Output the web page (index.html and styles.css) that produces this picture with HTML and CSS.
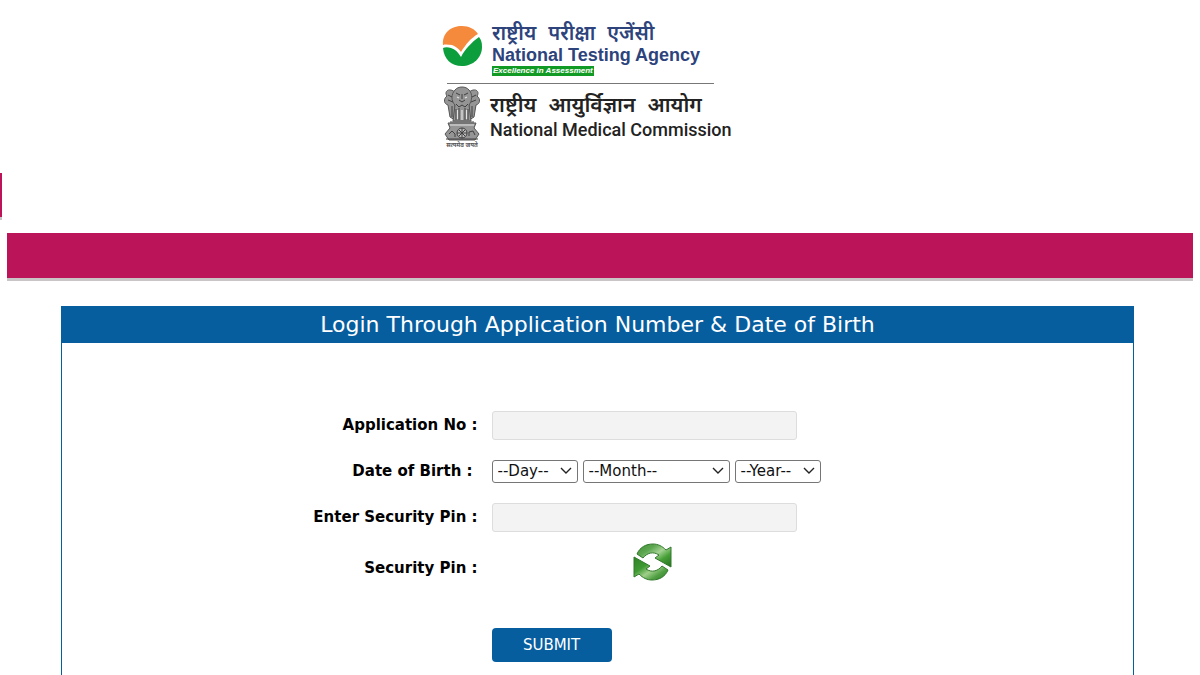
FILE: index.html
```html
<!DOCTYPE html>
<html lang="en">
<head>
<meta charset="utf-8">
<meta name="viewport" content="width=device-width, initial-scale=1">
<title>National Testing Agency</title>
<link rel="stylesheet" href="styles.css">
</head>
<body>
<header class="masthead">
  <div class="brand">
    <div class="agency">
      <svg class="agency-logo" viewBox="0 0 40 42" aria-hidden="true">
        <path fill="#f58a3c" d="M1 20C0 8 9 1 20 1c7 0 13 3 16 8-7 4-12 10-17 18-3-4-6-6-9-7-3 0-6-1-9 0z"/>
        <path fill="#0c9d3c" d="M1 23c2-1 5-1 8 0 4 1 7 4 10 9 4-8 11-15 18-20 3 4 3 7 3 10 0 11-9 19-20 19S2 34 1 23z"/>
      </svg>
      <div class="agency-text">
        <span class="hindi agency-hindi" lang="hi"><span>राष्ट्रीय</span> <span>परीक्षा</span> <span>एजेंसी</span></span>
        <span class="agency-name">National Testing Agency</span>
        <span class="agency-tag">Excellence in Assessment</span>
      </div>
    </div>
    <div class="commission">
      <div class="emblem">
        <svg class="emblem-art" viewBox="0 0 38 56" aria-hidden="true">
          <g fill="#959595" stroke="#555" stroke-width="1">
            <path d="M12 6C5 1 1 6 4 10c-4 3-3 8 1 9l2 12 5 3V15z"/>
            <path d="M26 6c7-5 11 0 8 4 4 3 3 8-1 9l-2 12-5 3V15z"/>
            <path d="M12 4c3-4 11-4 14 0 4 4 3 11 0 15l2 16H10l2-16c-4-4-4-11 0-15z"/>
            <path d="M5 37h28l-2 5 5 6-4 6H6l-4-6 5-6z"/>
          </g>
          <g fill="none" stroke="#404040" stroke-width="1">
            <path d="M13 7l4 2M25 7l-4 2M19 8v5M16 14l3 2 3-2M13 18l3 3 3-2 3 2 3-3M5 9l4 2M33 9l-4 2M5 14l5 2M33 14l-5 2M9 20v11M29 20v11M13 23v11M16 22v12M22 22v12M25 23v11M7 36h24M3 53h32"/>
            <circle cx="19" cy="47" r="5" fill="#bbb"/><path d="M19 42v10M14 47h10M16 44l6 6M22 44l-6 6M6 48l3-3 3 3v3M26 50v-4l4-1 2 4"/>
          </g>
          <g stroke="#e4e4e4" stroke-width="1.2"><path d="M14.500 24v9M19 24v10M23.500 24v9M14 11l2 1M24 11l-2 1M7 39h24"/></g>
        </svg>
        <span class="motto" lang="hi">सत्यमेव जयते</span>
      </div>
      <div class="commission-text">
        <span class="hindi commission-hindi" lang="hi"><span>राष्ट्रीय</span> <span>आयुर्विज्ञान</span> <span>आयोग</span></span>
        <span class="commission-name">National Medical Commission</span>
      </div>
    </div>
  </div>
</header>
<div class="ticker"></div>
<div class="banner"></div>
<main class="panel">
  <h1 class="panel-title">Login Through Application Number &amp; Date of Birth</h1>
  <form class="login">
    <label class="caption" for="appno">Application No :</label>
    <input class="field" id="appno" type="text">
    <label class="caption caption-date" for="day">Date of Birth :</label>
    <div class="dates">
      <select class="pick" id="day"><option>--Day--</option></select>
      <select class="pick pick-month" aria-label="Month"><option>--Month--</option></select>
      <select class="pick" aria-label="Year"><option>--Year--</option></select>
    </div>
    <label class="caption" for="pin">Enter Security Pin :</label>
    <input class="field" id="pin" type="text">
    <span class="caption">Security Pin :</span>
    <button class="refresh" type="button" aria-label="Refresh security pin">
      <svg class="refresh-icon" viewBox="0 0 39 38" aria-hidden="true">
        <defs>
          <linearGradient id="leaf" x1="0" y1="0" x2="1" y2="1"><stop offset="0" stop-color="#3d8c35"/><stop offset=".3" stop-color="#5fa852"/><stop offset=".5" stop-color="#a5d394"/><stop offset=".7" stop-color="#48a038"/><stop offset="1" stop-color="#23711e"/></linearGradient>
          <linearGradient id="moss" x1="0" y1="0" x2="1" y2="1"><stop offset="0" stop-color="#2c8124"/><stop offset=".35" stop-color="#3f9a33"/><stop offset=".55" stop-color="#a0cf8a"/><stop offset=".75" stop-color="#4f9f42"/><stop offset="1" stop-color="#2f7c28"/></linearGradient>
        </defs>
        <path fill="url(#leaf)" stroke="#31782b" d="M4 11C7 4 13 1 20 1c5 0 9 2 13 6l5-3v20L22 15l4-3c-6-4-12-2-16 3z"/>
        <path fill="url(#moss)" stroke="#31782b" d="M35 27c-3 7-9 10-16 10-5 0-9-2-13-6l-5 3V14l16 9-4 3c6 4 12 2 16-3z"/>
      </svg>
    </button>
    <button class="submit" type="submit">SUBMIT</button>
  </form>
</main>
</body>
</html>
```
FILE: styles.css
```css
* { box-sizing: border-box; }
body {
  margin: 0;
  background: #fff;
  color: #111;
  font-family: "DejaVu Sans", Verdana, sans-serif;
}
.masthead {
  display: flex;
  justify-content: center;
  min-height: 173px;
  padding: 20px 28px 0 0;
}
.brand { display: flex; flex-direction: column; width: 288px; }
.agency {
  display: flex;
  gap: 10px;
  width: 272px;
  padding-bottom: 7px;
}
.agency-logo { flex: none; width: 40px; height: 42px; margin-top: 5px; }
.agency-text { display: flex; flex-direction: column; align-items: flex-start; white-space: nowrap; }
.hindi { display: flex; gap: 12px; }
.agency-hindi { font: 600 20px/25px "Noto Sans", "Noto Sans Devanagari", sans-serif; color: #2d437c; }
.agency-name { font: bold 18px/20px "Liberation Sans", Arial, sans-serif; color: #2d437c; }
.agency-tag {
  margin-top: 1px;
  padding: 0 1px;
  background: #129b24;
  color: #fff;
  font: italic bold 8px/10px "Liberation Sans", Arial, sans-serif;
}
.commission {
  display: flex;
  gap: 9px;
  margin-left: 5px;
  border-top: 1px solid #777;
  width: 267px;
  padding-top: 2px;
}
.emblem { display: flex; flex-direction: column; flex: none; align-items: center; width: 38px; margin-left: -4px; }
.emblem-art { width: 38px; height: 56px; }
.motto { font: bold 6px/6px "Noto Sans", sans-serif; color: #555; white-space: nowrap; }
.commission-text { display: flex; flex-direction: column; padding-top: 5px; white-space: nowrap; }
.commission-hindi { font: 600 21px/26px "Noto Sans", "Noto Sans Devanagari", sans-serif; color: #222; }
.commission-name { font: 500 18px/26px Roboto, "Noto Sans", sans-serif; color: #222; }
.ticker {
  width: 2px;
  height: 47px;
  background: #bb1458;
  border-bottom: 3px solid #c9c5c7;
}
.banner {
  height: 48px;
  margin: 13px 7px 0;
  background: #bb1458;
  border-bottom: 3px solid #c9c5c7;
}
.panel {
  min-height: 370px;
  margin: 25px 66px 0 61px;
  border: 1px solid #075e9f;
  border-top: 0;
  border-bottom: 0;
}
.panel-title {
  margin: 0;
  padding: 3px 0;
  background: #075e9f;
  color: #fff;
  font-size: 22px;
  line-height: 31px;
  font-weight: normal;
  text-align: center;
}
.login {
  display: grid;
  grid-template-columns: 38.8% 1fr;
  grid-template-rows: 46px 46px 46px 56px;
  column-gap: 14px;
  align-items: center;
  padding-top: 59px;
}
.caption {
  justify-self: end;
  color: #000;
  font-size: 15px;
  line-height: 20px;
  font-weight: bold;
}
.caption-date { padding-right: 5px; }
.field {
  width: 305px;
  height: 29px;
  padding: 0 8px;
  border: 1px solid #ddd;
  border-radius: 3px;
  background: #f3f3f3;
  font: inherit;
  font-size: 15px;
}
.dates { display: flex; gap: 5px; }
.pick {
  width: 86px;
  height: 23px;
  padding: 0 5px;
  appearance: none;
  border: 1px solid #767676;
  border-radius: 3px;
  background: #fff url("data:image/svg+xml,%3Csvg xmlns='http://www.w3.org/2000/svg' width='12' height='8' fill='none' stroke='%23222' stroke-width='1.4'%3E%3Cpath d='M1 1l5 5 5-5'/%3E%3C/svg%3E") no-repeat right 5px center;
  color: #111;
  font-family: "DejaVu Sans", Verdana, sans-serif;
  font-size: 15px;
}
.pick-month { width: 147px; }
.refresh {
  width: 39px;
  height: 38px;
  margin-left: 141px;
  margin-bottom: 12px;
  padding: 0;
  border: 0;
  background: none;
}
.refresh-icon { display: block; width: 39px; height: 38px; }
.submit {
  grid-column: 2;
  width: 120px;
  height: 34px;
  margin-top: 32px;
  padding: 0;
  border: 0;
  border-radius: 4px;
  background: #075e9f;
  color: #fff;
  font: 15px "DejaVu Sans", Verdana, sans-serif;
}
```
